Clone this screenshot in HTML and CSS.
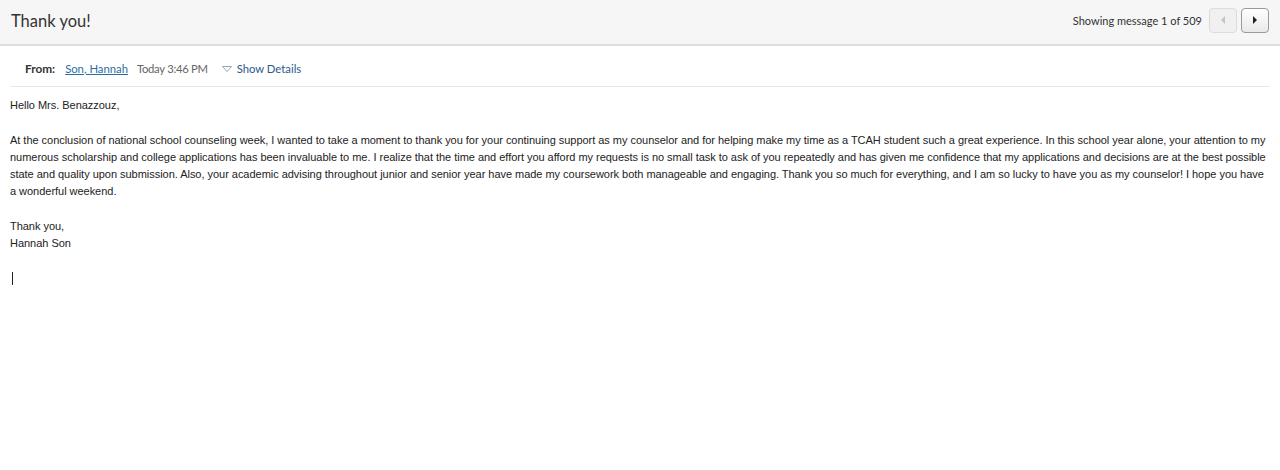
FILE: index.html
```html
<!DOCTYPE html>
<html>
<head>
<meta charset="utf-8">
<link rel="stylesheet" href="styles.css">
</head>
<body>
<div class="header">
  <h1 class="subject">Thank you!</h1>
  <div class="pager">
    <span class="count">Showing message 1 of 509</span>
    <button class="nav disabled" aria-label="Previous"><svg width="6" height="8" viewBox="0 0 6 8"><path d="M5 0 L1 4 L5 8 Z" fill="#c4c4c4"/></svg></button>
    <button class="nav" aria-label="Next"><svg width="6" height="8" viewBox="0 0 6 8"><path d="M1 0 L5 4 L1 8 Z" fill="#222"/></svg></button>
  </div>
</div>
<div class="meta">
  <span class="from-label">From:</span>
  <a class="sender" href="#">Son, Hannah</a>
  <span class="date">Today 3:46 PM</span>
  <span class="details"><svg class="tri" width="10" height="6" viewBox="0 0 10 6"><path d="M0.5 0.5 H9.5 L5 5.5 Z" fill="none" stroke="#9aa7b4" stroke-width="1"/></svg>Show Details</span>
</div>
<div class="body">
  <p>Hello Mrs. Benazzouz,</p>
  <p>At the conclusion of national school counseling week, I wanted to take a moment to thank you for your continuing support as my counselor and for helping make my time as a TCAH student such a great experience. In this school year alone, your attention to my numerous scholarship and college applications has been invaluable to me. I realize that the time and effort you afford my requests is no small task to ask of you repeatedly and has given me confidence that my applications and decisions are at the best possible state and quality upon submission. Also, your academic advising throughout junior and senior year have made my coursework both manageable and engaging. Thank you so much for everything, and I am so lucky to have you as my counselor! I hope you have a wonderful weekend.</p>
  <p>Thank you,<br>Hannah Son</p>
  <p class="cursor-line"><span class="cursor"></span></p>
</div>
</body>
</html>
```

FILE: styles.css
```css
html, body {
  margin: 0;
  padding: 0;
  background: #ffffff;
}
body {
  width: 1280px;
  height: 470px;
  overflow: hidden;
}
.header {
  height: 44px;
  background: #f6f6f6;
  border-bottom: 2px solid #dedede;
  display: flex;
  align-items: center;
  justify-content: space-between;
  padding: 0 11px 0 11px;
}
.subject {
  margin: 0;
  font-family: Lato, "Open Sans", sans-serif;
  font-weight: 400;
  font-size: 16.5px;
  color: #333;
  position: relative;
  top: -1px;
}
.pager {
  display: flex;
  align-items: center;
  gap: 4px;
  position: relative;
  top: -2px;
}
.count {
  font-family: Lato, "Open Sans", sans-serif;
  font-size: 11px;
  color: #333;
  margin-right: 3px;
}
.nav {
  width: 28px;
  height: 25px;
  border-radius: 4px;
  border: 1px solid #9a9a9a;
  background: linear-gradient(#ffffff, #e9e9e9);
  display: flex;
  align-items: center;
  justify-content: center;
  padding: 0;
}
.nav.disabled {
  border-color: #dcdcdc;
  background: #f0f0f0;
}
.meta {
  margin: 0 10px;
  height: 41px;
  display: flex;
  align-items: center;
  padding-left: 15px;
  padding-top: 5px;
  box-sizing: border-box;
  border-bottom: 1px solid #e8e8e8;
  font-family: Lato, "Open Sans", sans-serif;
  font-size: 11.3px;
}
.from-label {
  font-weight: 700;
  color: #333;
  font-size: 11.8px;
  margin-right: 10px;
}
.sender {
  color: #2a6ea6;
  text-decoration: underline;
  margin-right: 9px;
}
.date {
  color: #666;
  margin-right: 14px;
  letter-spacing: -0.3px;
}
.details {
  color: #2a5a8a;
  display: inline-flex;
  align-items: center;
}
.tri {
  margin-right: 5px;
}
.body {
  padding: 10px 10px 0 10px;
  font-family: "Liberation Sans", Arial, sans-serif;
  font-size: 11px;
  letter-spacing: -0.03px;
  line-height: 17px;
  color: #222;
}
.body p {
  margin: 0 0 18px 0;
}
.cursor {
  display: inline-block;
  width: 1px;
  height: 13px;
  background: #222;
  margin-left: 2px;
  vertical-align: -3px;
}
```
